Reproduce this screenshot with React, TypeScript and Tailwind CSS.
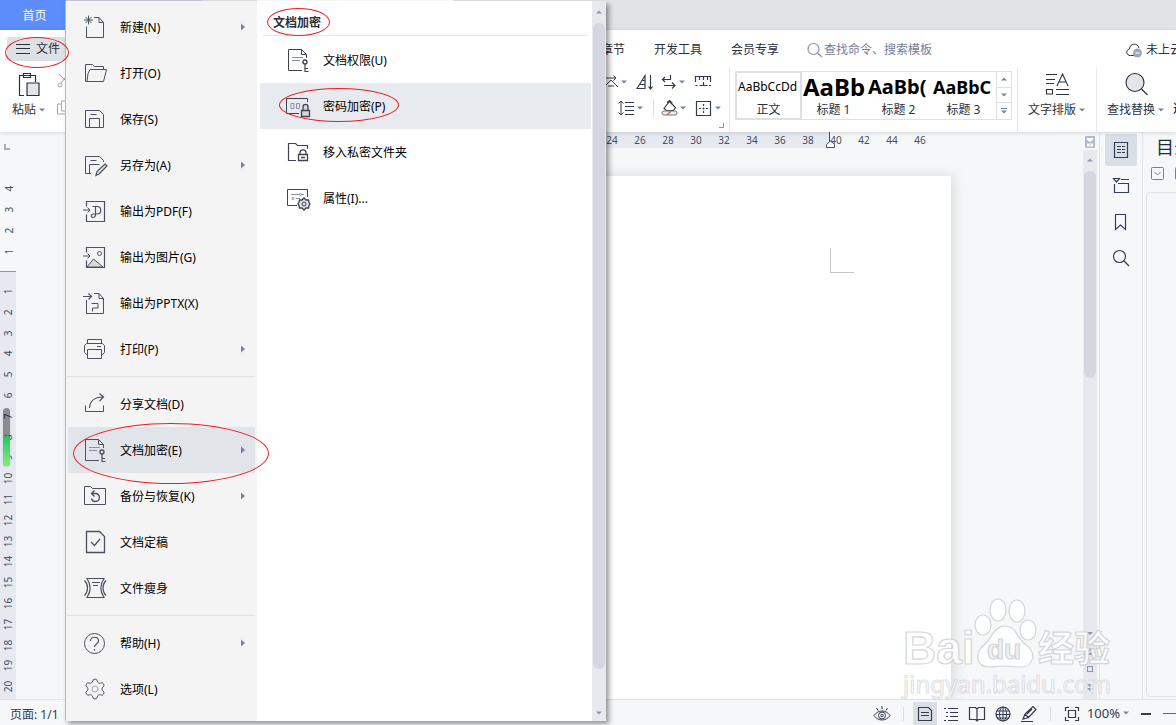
import type { ReactNode } from "react";
import { Settings } from "lucide-react";
import clsx from "clsx";

interface IconProps {
  children: ReactNode;
  size?: number;
  className?: string;
}

function Icon({ children, size = 24, className }: IconProps) {
  return (
    <svg
      width={size}
      height={size}
      viewBox={`0 0 ${size} ${size}`}
      fill="none"
      stroke="currentColor"
      strokeWidth="1"
      aria-hidden="true"
      className={clsx("shrink-0 overflow-visible", className)}
    >
      {children}
    </svg>
  );
}

function Caret() {
  return (
    <svg width="12" height="6" viewBox="0 0 12 6" className="shrink-0" aria-hidden="true">
      <path d="M3 1.5h6L6 4.5z" fill="#7883a0" />
    </svg>
  );
}

function Ring({ className }: { className: string }) {
  return <span className={clsx("pointer-events-none absolute z-30 rounded-[50%] border border-[#ee1c25]", className)} />;
}

const keyDoc = (
  <Icon>
    <path d="M16 22.5H2.5v-21h13l5 5V10" />
    <path d="M15.500 1.500v5h5" />
    <path d="M6 9.5h11M6 12.5h8" stroke="#8b91a0" />
    <circle cx="19" cy="14" r="2" strokeWidth="1.4" />
    <path d="M19 16v7.5h3.5M19 20.500h3" strokeWidth="1.2" />
  </Icon>
);

const icons = {
  create: (
    <Icon>
      <path d="M3.5 11.5v11h17v-15l-4.5-5h-5" />
      <path d="M16 2.5v5h4.5" />
      <path d="M5.5 .5v9M1 5h9M2.5 2l6 6M8.5 2l-6 6" />
    </Icon>
  ),
  open: (
    <Icon>
      <path d="M2.5 20.5v-17h7l2 2h9v3" />
      <path d="M2.500 20.5h18l3-12H7l-2 4-1 8" />
    </Icon>
  ),
  save: (
    <Icon>
      <path d="M2.5 3.5h14l4 4v13h-18z" />
      <path d="M6.5 20.5v-9h10v9M7.5 7.5h6" />
    </Icon>
  ),
  saveAs: (
    <Icon>
      <path d="M8 20.5H2.5v-17h14l4 4V9" />
      <path d="M6.5 20.5v-9h10M7.5 7.5h6" />
      <path d="M13 22.5l1-4 8-7.5 2 2-8 8z" fill="#dfe1e5" strokeWidth="1.2" />
    </Icon>
  ),
  pdf: (
    <Icon>
      <path d="M3.5 7.5v-5h18v20h-18v-7" strokeWidth="1.2" />
      <path d="M0 11h7M4.5 8.5L7 11l-2.5 2.5" />
      <path d="M9.5 7.5h4.500c5 0 5 7.5 0 7.5h-3c-3.5 0-3.5 3.5-1 3.500s2.500-1.500 2.500-3.500v-7.500" strokeWidth="1.2" />
    </Icon>
  ),
  picture: (
    <Icon>
      <path d="M4 22l6.500-8L20 22z" fill="#dcdcde" />
      <path d="M3.5 7.5v-5h18v20h-18v-7" strokeWidth="1.2" />
      <path d="M0 11h7M4.5 8.5L7 11l-2.5 2.5" />
      <circle cx="16.5" cy="8.5" r="2" />
    </Icon>
  ),
  pptx: (
    <Icon>
      <path d="M3.5 9v13.5h17v-15l-4.5-5h-5" />
      <path d="M16 2.5v5h4.5" />
      <path d="M0 5.500h8.5M5.5 2.500l3 3-3 3" strokeWidth="1.2" />
      <path d="M8.5 12.500h6.500v4.500H9.500v3.500" />
    </Icon>
  ),
  print: (
    <Icon>
      <path d="M4.5 6V2.5h14V6" />
      <path d="M4.5 17.5h-1l-2-2v-7l2-2h16l2 2v7l-2 2h-1" />
      <path d="M4.5 12.5h14v9h-14zM14 9.5h4" />
    </Icon>
  ),
  share: (
    <Icon>
      <path d="M2.5 13.5v6h18v-6" />
      <path d="M6.5 16C7 9 11 5 20 5M16.5 1.5L20.5 5l-4 4" strokeWidth="1.2" />
    </Icon>
  ),
  encrypt: keyDoc,
  backup: (
    <Icon>
      <path d="M1.5 2.5h6l2 2h13v16h-21z" />
      <path d="M9 9.500h3.5a4 4 0 1 1-4 5M11.500 6.500l-3 3 3 3" strokeWidth="1.3" />
    </Icon>
  ),
  finalize: (
    <Icon>
      <path d="M3.5 1.5h13l5 5v16h-18z" strokeWidth="1.3" />
      <path d="M8 12l3.5 3.5L17 9" strokeWidth="1.3" />
    </Icon>
  ),
  slim: (
    <Icon>
      <path d="M4 2.5h17c-4 6-4 13 0 19H4c4-6 4-13 0-19z" strokeWidth="1.2" />
      <path d="M1.5 4.5c4 4 4 11 0 15M23 4.500c-4 4-4 11 0 15" strokeWidth="1.2" />
      <path d="M9 6.500h8M10 9.5h5" />
    </Icon>
  ),
  help: (
    <Icon>
      <circle cx="11.5" cy="12.5" r="10" />
      <path d="M7.500 10c0-5 8-5 8 0 0 3-4 3-4 6" strokeWidth="1.2" />
      <path d="M11.5 18v1.5" strokeWidth="1.2" />
    </Icon>
  ),
  options: <Settings size={24} strokeWidth={1} className="shrink-0 [&_circle]:stroke-[#a4a8b0]" />,
  password: (
    <Icon>
      <path d="M13 19.5H.5v-15h21V8" />
      <path d="M5 9.5h3v5H5zM10.500 9.5h3v5h-3z" stroke="#8b91a0" />
      <path d="M15.5 16.5h8v6h-8zM17 16.5V13c0-3.500 5-3.500 5 0v3.5" fill="#d5d7dc" strokeWidth="1.3" />
    </Icon>
  ),
  privateFolder: (
    <Icon>
      <path d="M10 20.5H2.5v-17h7l2 2h10V9" strokeWidth="1.2" />
      <path d="M12.5 14.500h9v6h-9zM14 14.5v-2c0-3.500 6-3.500 6 0v2M15 17.500h4" strokeWidth="1.3" />
    </Icon>
  ),
  properties: (
    <Icon>
      <path d="M11 19.5H1.5v-16h20V11" />
      <path d="M5 8.5h8M16 8.5h2M10 12.5h4" stroke="#8b91a0" />
      <circle cx="14.5" cy="8.5" r="1" stroke="#8b91a0" />
      <circle cx="7" cy="12.5" r="1" stroke="#8b91a0" />
      <path d="M18 12l2 2 2.500 0 .5 2.500 1 1.500-1 1.500-.5 2.500-2.500 0-2 2-2-2-2.500 0-.5-2.500-1-1.500 1-1.500.5-2.500 2.500 0z" fill="#dfe1e5" strokeWidth="1.3" />
      <circle cx="18" cy="18" r="2" />
    </Icon>
  ),
};

interface MenuEntry {
  label: string;
  icon: ReactNode;
  arrow?: boolean;
  active?: boolean;
}

const menuGroups: MenuEntry[][] = [
  [
    { label: "新建(N)", icon: icons.create, arrow: true },
    { label: "打开(O)", icon: icons.open },
    { label: "保存(S)", icon: icons.save },
    { label: "另存为(A)", icon: icons.saveAs, arrow: true },
    { label: "输出为PDF(F)", icon: icons.pdf },
    { label: "输出为图片(G)", icon: icons.picture },
    { label: "输出为PPTX(X)", icon: icons.pptx },
    { label: "打印(P)", icon: icons.print, arrow: true },
  ],
  [
    { label: "分享文档(D)", icon: icons.share },
    { label: "文档加密(E)", icon: icons.encrypt, arrow: true, active: true },
    { label: "备份与恢复(K)", icon: icons.backup, arrow: true },
    { label: "文档定稿", icon: icons.finalize },
    { label: "文件瘦身", icon: icons.slim },
  ],
  [
    { label: "帮助(H)", icon: icons.help, arrow: true },
    { label: "选项(L)", icon: icons.options },
  ],
];

const submenu: MenuEntry[] = [
  { label: "文档权限(U)", icon: keyDoc },
  { label: "密码加密(P)", icon: icons.password, active: true },
  { label: "移入私密文件夹", icon: icons.privateFolder },
  { label: "属性(I)...", icon: icons.properties },
];

function FileMenu() {
  return (
    <div className="absolute top-px left-[65px] z-20 flex h-[720px] w-[541px] border-l border-[#b4bac4] bg-white shadow-[3px_3px_5px_rgba(0,0,0,0.4)]">
      <nav className="w-[191px] shrink-0 bg-[#f4f4f4] pt-[3px]" aria-label="文件">
        {menuGroups.map((group, i) => (
          <div key={i}>
            {i > 0 && <hr className="my-1 mr-[2px] border-[#e0e1e5]" />}
            {group.map((item) => (
              <button
                key={item.label}
                type="button"
                className={clsx(
                  "relative mx-[2px] flex h-[46px] w-[187px] items-center gap-[13px] pr-[9px] pl-[15px] text-left text-[#4b5160]",
                  item.active && "bg-[#e1e4e9]"
                )}
              >
                {item.icon}
                <span className="grow pt-[2px] text-xs whitespace-nowrap text-black">{item.label}</span>
                {item.arrow && (
                  <svg width="6" height="8" viewBox="0 0 6 8" aria-hidden="true">
                    <path d="M1 .5v7L5 4z" fill="#75809b" />
                  </svg>
                )}
                {item.active && <Ring className="-top-1 left-[5px] h-[61px] w-[196px]" />}
              </button>
            ))}
          </div>
        ))}
      </nav>

      <section className="grow pt-px pl-[3px]">
        <h2 className="relative mr-1 ml-[3px] mb-px flex h-[34px] items-center border-b border-[#e6e7ea] pt-2 pl-[10px] text-xs font-bold text-[#2b303c]">
          文档加密
          <Ring className="top-[6px] left-1 h-[28px] w-[63px]" />
        </h2>
        {submenu.map((item) => (
          <button
            key={item.label}
            type="button"
            className={clsx(
              "relative flex h-[46px] w-[331px] items-center gap-[13px] pl-[26px] text-left text-[#3d4352]",
              item.active && "bg-[#e7eaef]"
            )}
          >
            {item.icon}
            <span className="pt-[2px] text-xs text-black">{item.label}</span>
            {item.active && <Ring className="top-[5px] left-[19px] h-[34px] w-[120px]" />}
          </button>
        ))}
      </section>

      <div className="flex w-[14px] shrink-0 flex-col items-center bg-[#e8e9ee] pt-2 pb-[5px]">
        <svg width="6" height="6" viewBox="0 0 6 6" aria-hidden="true">
          <path d="M0 4.5h6L3 1.5z" fill="#8b96b3" />
        </svg>
        <div className="mt-2 h-[646px] w-3 rounded-full bg-[#d4d7df]" />
        <svg width="6" height="6" viewBox="0 0 6 6" className="mt-auto" aria-hidden="true">
          <path d="M0 1.5h6L3 4.5z" fill="#8b96b3" />
        </svg>
      </div>
    </div>
  );
}

const gallery = [
  { sample: "AaBbCcDd", label: "正文", style: "text-xs font-normal" },
  { sample: "AaBb", label: "标题 1", style: "text-2xl font-bold" },
  { sample: "AaBb(", label: "标题 2", style: "text-xl font-bold" },
  { sample: "AaBbC", label: "标题 3", style: "text-lg font-bold" },
];

function Tool({ label, children, caret }: { label: string; children: ReactNode; caret?: boolean }) {
  return (
    <button type="button" aria-label={label} className="flex items-center text-[#343b4d]">
      <Icon size={16}>{children}</Icon>
      {caret && <Caret />}
    </button>
  );
}

function BigTool({ label, children }: { label: string; children: ReactNode }) {
  return (
    <button type="button" className="flex shrink-0 flex-col items-center text-[#2b3142]">
      <Icon>{children}</Icon>
      <span className="flex h-7 items-center text-xs whitespace-nowrap">
        {label}
        <Caret />
      </span>
    </button>
  );
}

function Ribbon() {
  return (
    <header className="relative h-[102px] shrink-0 bg-white shadow-[0_1px_4px_rgba(0,0,0,0.14)]">
      <div className="flex h-[38px] items-center overflow-hidden pl-[7px] text-xs whitespace-nowrap text-[#2b303c]">
        <button type="button" className="flex h-6 w-[60px] shrink-0 items-center gap-[5px] rounded-xs bg-[#dce1e5] pl-2">
          <Icon size={16}>
            <path d="M1 3.5h14M1 7.500h14M1 12.500h14" />
          </Icon>
          文件
        </button>
        <div className="flex items-center gap-[29px] pt-px pl-[534px]">
          <button type="button">章节</button>
          <button type="button">开发工具</button>
          <button type="button">会员专享</button>
          <label className="flex items-center text-[#737c98]">
            <Icon size={16} className="text-[#8a93ab]">
              <circle cx="5.5" cy="7" r="5.5" strokeWidth="1.2" />
              <path d="M9.500 11l4.500 4" strokeWidth="1.4" />
            </Icon>
            <input
              aria-label="搜索"
              placeholder="查找命令、搜索模板"
              className="w-[160px] bg-transparent outline-none placeholder:text-[#737c98]"
            />
          </label>
        </div>
        <button type="button" className="ml-[142px] flex shrink-0 items-center gap-1 pt-px">
          <Icon size={16}>
            <path d="M8 13.5H4.500c-5 0-4.500-6-1-6.5 0-6 8.500-6.500 9.500-1" />
            <circle cx="11.500" cy="11" r="4.5" fill="#a0a8bb" stroke="none" />
            <path d="M9.500 11h4" stroke="#fff" />
          </Icon>
          未上云
        </button>
      </div>

      <div className="flex h-[64px] items-start overflow-hidden">
        <div className="flex w-[66px] shrink-0 gap-[-4px] pt-1 pl-3">
          <button type="button" className="flex w-[45px] shrink-0 flex-col items-start text-[#2b3142]">
            <Icon className="ml-1">
              <path d="M8 23.5H3.500V3.500h16V10M7.500 1.500h7v4h-7z" strokeWidth="1.2" />
              <path d="M11 11h12v12.500H11z" fill="#e2e4e8" strokeWidth="1.2" />
            </Icon>
            <span className="flex h-7 items-center text-xs whitespace-nowrap">
              粘贴
              <Caret />
            </span>
          </button>
          <div className="flex flex-col gap-3 text-[#a3a7b0]">
            <Icon size={16}>
              <path d="M2 2l10 10M11 2L4 11" />
              <circle cx="3" cy="13" r="2" />
            </Icon>
            <Icon size={16}>
              <path d="M4.5 1h9v10h-9zM4.500 4h-4v10h9v-3" />
            </Icon>
          </div>
        </div>

        <div className="ml-[536px] flex w-[127px] shrink-0 flex-col pt-[3px]">
          <div className="flex h-[22px] items-center gap-[7px]">
            <Tool label="字符缩放" caret>
              <path d="M2 13l7-7 7 7M6 12h6M4 4h10M11.500 1.500L14 4l-2.500 2.500" />
            </Tool>
            <Tool label="排序">
              <path d="M0 14.500L8 1.500v13zM3 10.500h5M5 6.500h3M13.500 1v14M11.500 12.500l2 2.500 2-2.500" strokeWidth="1.2" />
            </Tool>
            <Tool label="换行" caret>
              <path d="M10.500 1v4.500h-8M5 3L2.500 5.500 5 8M4 11.500h11M12 8.500l3 3-3 3" strokeWidth="1.2" />
            </Tool>
            <Tool label="标尺">
              <path d="M.5 8V2.500h15V8M4.500 3v3M8.500 3v3M12.500 3v3M4.500 11.500h8M8.500 8v3M.5 11.500h2M14 11.500h2" strokeWidth="1.2" />
            </Tool>
          </div>
          <div className="mt-1 flex h-[22px] items-center gap-[7px] pl-4">
            <Tool label="行距" caret>
              <path d="M3 1v14M.5 3.5L3 1l2.500 2.500M.5 12.500L3 15l2.500-2.500M7 2.500h9M7 6.500h9M7 10.500h9M7 14.500h9" />
            </Tool>
            <span className="h-[18px] w-px bg-[#dcdfe5]" />
            <Tool label="底纹" caret>
              <path d="M3 8.500l5.500-7 6 6-2 3h-7zM6 2.500l2.500-2 3 3" strokeWidth="1.2" />
              <rect x="1" y="11" width="15" height="4" rx="2" fill="#eee" stroke="#777" />
              <path d="M6 15l4-4" stroke="#e05a4f" strokeWidth="1.3" />
            </Tool>
            <Tool label="边框" caret>
              <path d="M.5 1.500h14v14H.5z" strokeWidth="1.2" />
              <path d="M7.500 4v2M7.500 7.500v2M7.500 11v2M3 8.500h2M6.500 8.500h2M10 8.500h2" strokeWidth="1.2" />
            </Tool>
          </div>
          <svg width="5" height="5" viewBox="0 0 5 5" className="mt-1 ml-[117px]" aria-hidden="true">
            <path d="M4.5 0v4.5H0" fill="none" stroke="#8d94a6" />
          </svg>
        </div>

        <div className="flex h-full shrink-0 items-start border-l border-[#e6e8ec] pl-[5px]">
          <div className="mt-[3px] flex h-[49px] border border-[#dfe1e6]">
            {gallery.map((item, i) => (
              <button
                key={item.label}
                type="button"
                className={clsx(
                  "flex w-[65px] flex-col whitespace-nowrap",
                  i === 0 && "outline-2 -outline-offset-1 outline-[#dfe0e6]"
                )}
              >
                <span className={clsx("flex h-[30px] items-center pl-[2px] text-black", item.style)}>{item.sample}</span>
                <span className="w-full text-center text-xs leading-4 text-[#2b303c]">{item.label}</span>
              </button>
            ))}
            <div className="flex w-[15px] flex-col divide-y divide-[#dfe1e6] border-l border-[#dfe1e6] bg-white">
              <button type="button" aria-label="上一行" className="flex grow items-center justify-center">
                <span className="rotate-180"><Caret /></span>
              </button>
              <button type="button" aria-label="下一行" className="flex grow items-center justify-center"><Caret /></button>
              <button type="button" aria-label="更多样式" className="flex grow flex-col items-center justify-center">
                <span className="h-px w-[6px] bg-[#75809b]" />
                <Caret />
              </button>
            </div>
          </div>
        </div>

        <div className="ml-[5px] flex h-full shrink-0 border-l border-[#e6e8ec] pt-1 pr-2 pl-[10px]">
          <BigTool label="文字排版">
            <path d="M0 2.500h11M0 7.500h9M0 11.500h8M.5 17.500h6v4.500h-6zM10 17.500h13M10 22.500h13M11 14l5.500-12L22 14M13 10h7" strokeWidth="1.1" />
          </BigTool>
        </div>
        <div className="flex h-full shrink-0 border-l border-[#e6e8ec] pt-1 pl-[10px]">
          <BigTool label="查找替换">
            <circle cx="10" cy="10.500" r="9" fill="#e4e5e8" strokeWidth="1.1" />
            <path d="M16.500 17l6 6" strokeWidth="1.3" />
          </BigTool>
          <button type="button" className="ml-[6px] self-start pt-[29px] text-xs whitespace-nowrap">选择</button>
        </div>
      </div>
      <Ring className="top-[7px] left-[5px] h-[31px] w-[64px]" />
    </header>
  );
}

function VerticalRuler() {
  const ticks = Array.from({ length: 20 }, (_, i) => i + 1);
  return (
    <aside className="relative flex w-4 shrink-0 flex-col text-[10px] leading-none text-[#474f63]">
      <div className="h-[46px] shrink-0 pt-3 pl-1">
        <svg width="6" height="6" viewBox="0 0 6 6" aria-hidden="true">
          <path d="M1 0v5h5" fill="none" stroke="#a9adba" strokeWidth="2" />
        </svg>
      </div>
      <div className="grid h-[84px] shrink-0 grid-rows-4">
        {[4, 3, 2, 1].map((n) => (
          <span key={n} className="flex -rotate-90 items-center justify-center">{n}</span>
        ))}
      </div>
      <div className="mt-[9px] grow border-t border-[#8c9bab] bg-[#e6e9ef] pt-[9px]">
        <div className="grid h-[416px] auto-rows-fr">
          {ticks.map((n) => (
            <span key={n} className="flex -rotate-90 items-center justify-center">{n}</span>
          ))}
        </div>
      </div>
      <div className="absolute top-[276px] left-[3px] h-[58px] w-[7px] overflow-hidden rounded-full bg-black/40 shadow">
        <div className="mt-[28px] h-[30px] bg-linear-to-b from-[#1fc25f] to-[#7df07d]" />
      </div>
    </aside>
  );
}

function Workspace() {
  return (
    <main className="flex grow overflow-hidden">
      <VerticalRuler />
      <div className="flex grow flex-col overflow-hidden">
        <div className="flex h-4 shrink-0 bg-[linear-gradient(to_right,transparent_134px,#e6e9ef_134px,#e6e9ef_813px,transparent_813px)] pl-[582px] text-[10px] text-[#474f63]">
          {[24, 26, 28, 30, 32, 34, 36, 38, 40, 42, 44, 46].map((n) => (
            <span key={n} className="relative w-7 shrink-0 text-center leading-4">
              {n}
              {n === 40 && (
                <svg width="10" height="16" viewBox="0 0 10 16" className="absolute top-0 left-1" aria-hidden="true">
                  <path d="M3.5 0v10M.5 15.5v-3l4-3.500 4 3.500v3z" fill="#fff" stroke="#474f63" />
                </svg>
              )}
            </span>
          ))}
        </div>
        <article className="mt-7 ml-[134px] flex w-[801px] grow items-start justify-end bg-white pt-[72px] pr-[97px] shadow-[2px_0_14px_rgba(0,0,0,0.13)]">
          <span className="h-[25px] w-6 border-b border-l border-[#c4c4c4]" />
        </article>
      </div>

      <div className="flex w-[14px] shrink-0 flex-col items-center">
        <svg width="10" height="12" viewBox="0 0 10 12" className="mt-1 shrink-0" aria-hidden="true">
          <rect width="10" height="12" rx="1" fill="#b2bad0" />
          <path d="M2 2h6v2L5 6 2 4zM2 7.500h6v3H2z" fill="#fff" />
          <path d="M5 8v2" stroke="#b2bad0" />
        </svg>
        <div className="mt-[2px] flex w-full grow flex-col items-center bg-[#e8e9ee] pt-[7px] pb-2">
          <svg width="6" height="6" viewBox="0 0 6 6" aria-hidden="true">
            <path d="M0 4.5h6L3 1.5z" fill="#8b96b3" />
          </svg>
          <div className="mt-2 h-[207px] w-3 shrink-0 rounded-full bg-[#d4d7df]" />
          <svg width="6" height="60" viewBox="0 0 6 60" className="mt-auto" aria-hidden="true">
            <path d="M0 1h6L3 4zM0 20l3-3 3 3zM0 24l3-3 3 3zM0 53h6l-3 3zM0 57h6l-3 3z" fill="#8b96b3" />
            <rect x=".5" y="35.5" width="5" height="5" fill="none" stroke="#8b96b3" />
          </svg>
        </div>
      </div>

      <nav className="ml-[2px] flex w-[44px] shrink-0 flex-col items-center gap-1 border-x border-[#e1e4e8] pt-[2px] text-[#343f57]">
        <button type="button" aria-label="目录" className="flex size-8 items-center justify-center rounded-xs bg-[#d9dfe6]">
          <Icon size={16}>
            <path d="M1.5 .5h13v15h-13z" strokeWidth="1.2" />
            <path d="M4 4.5h4M9 4.5h3M4 7.5h4M9 7.5h3M4 10.5h4M9 10.5h3" />
          </Icon>
        </button>
        <button type="button" aria-label="章节" className="flex size-8 items-center justify-center">
          <Icon size={16}>
            <path d="M.5 .5h6l-3 3.500zM8 1.500h8M1.500 6v8.500h14v-9H5" strokeWidth="1.2" />
          </Icon>
        </button>
        <button type="button" aria-label="书签" className="flex size-8 items-center justify-center">
          <Icon size={16}>
            <path d="M2.5 .5h10v15l-5-4.500-5 4.500z" strokeWidth="1.2" />
          </Icon>
        </button>
        <button type="button" aria-label="查找" className="flex size-8 items-center justify-center">
          <Icon size={16}>
            <circle cx="6.5" cy="6.5" r="6" strokeWidth="1.2" />
            <path d="M11 11l5 5" strokeWidth="1.3" />
          </Icon>
        </button>
      </nav>

      <aside className="flex w-[33px] shrink-0 flex-col overflow-hidden pl-[3px]">
        <h2 className="pt-[3px] pl-[10px] text-lg leading-6 whitespace-nowrap text-[#222b40]">目录</h2>
        <div className="flex gap-[11px] pt-2 pl-[5px] text-[#7b7f87]">
          <Icon size={13}>
            <rect x=".5" y=".5" width="12" height="12" rx="1" />
            <path d="M3.5 5l3 3 3-3" />
          </Icon>
          <Icon size={13}>
            <rect x=".5" y=".5" width="12" height="12" rx="1" />
          </Icon>
        </div>
        <div className="mt-3 mb-[2px] w-[60px] grow rounded-sm border border-[#dfe2e7]" />
      </aside>
    </main>
  );
}

function ViewButton({ label, children, active }: { label: string; children: ReactNode; active?: boolean }) {
  return (
    <button
      type="button"
      aria-label={label}
      className={clsx("flex h-full items-center justify-center", active ? "mx-px w-6 bg-[#dadee6]" : "w-[26px]")}
    >
      <Icon size={16}>{children}</Icon>
    </button>
  );
}

function StatusBar() {
  return (
    <footer className="flex h-[26px] shrink-0 items-center border-t border-[#dfe2e8] pl-[10px] text-xs text-[#343b4d]">
      <span className="pt-1">页面: 1/1</span>
      <div className="ml-auto flex h-full items-center pt-[2px]">
        <ViewButton label="护眼模式">
          <path d="M0 9.5c4-6 12-6 16 0-4 6-12 6-16 0zM8 0v3M2.5 2l1.500 2.500M13.500 2L12 4.500" />
          <circle cx="8" cy="9.5" r="3.500" />
          <circle cx="8" cy="9.5" r="1.300" />
        </ViewButton>
        <span className="mx-2 h-[14px] w-px bg-[#d8dce3]" />
        <ViewButton label="页面视图" active>
          <path d="M1.5 1.500h10l3 3v10h-13zM4 6.500h8M4 9.500h8" strokeWidth="1.2" />
        </ViewButton>
        <ViewButton label="大纲">
          <path d="M1 2.5h2M5 2.5h10M3 6.5h2M7 6.5h8M3 10.5h2M7 10.5h8M1 14.5h2M5 14.5h10" strokeWidth="1.2" />
        </ViewButton>
        <ViewButton label="阅读版式">
          <path d="M8 3L6.500 1.500h-6v12h6L8 15l1.500-1.500h6v-12h-6zM8 3v12" strokeWidth="1.2" />
        </ViewButton>
        <ViewButton label="Web版式">
          <circle cx="8" cy="8" r="7" strokeWidth="1.2" />
          <ellipse cx="8" cy="8" rx="3.500" ry="7" />
          <path d="M8 1v14M2 5h12M1 8.500h14M2 12h12" />
        </ViewButton>
        <ViewButton label="写作模式">
          <path d="M2 13l2-5 8-7.500 3 3-7.500 8zM4 8l4 4M11 3L6 8M0 15.500h12" strokeWidth="1.2" />
        </ViewButton>
        <span className="mx-2 h-[14px] w-px bg-[#d8dce3]" />
        <ViewButton label="适应页面">
          <path d="M1.5 5V1.500H5M11 1.500h3.500V5M14.500 11v3.500H11M5 14.500H1.500V11M4.500 4.500h7v7h-7z" strokeWidth="1.2" />
        </ViewButton>
        <button type="button" className="ml-[2px] flex items-center text-[13px]">
          100%
          <Caret />
        </button>
        <button type="button" aria-label="缩小" className="ml-[9px] h-[2px] w-[10px] bg-[#343b4d]" />
        <span className="ml-3 h-px w-[13px] bg-[#5d6475]" />
      </div>
    </footer>
  );
}

function Watermark() {
  return (
    <svg
      width="216"
      height="106"
      viewBox="0 0 216 106"
      className="pointer-events-none absolute right-[60px] bottom-[24px]"
      fill="#fff"
      fillOpacity="0.8"
      stroke="#c4c5c8"
      strokeOpacity="0.7"
      strokeWidth="1.2"
      aria-label="Baidu 经验"
    >
      <text x="3" y="69" className="font-['Liberation_Sans',sans-serif] text-[46px] font-bold">Bai</text>
      <ellipse cx="83" cy="30" rx="8" ry="10" />
      <ellipse cx="98" cy="15" rx="8" ry="11" />
      <ellipse cx="117" cy="16" rx="8" ry="11" />
      <ellipse cx="128" cy="35" rx="8" ry="10" />
      <path d="M105 31c11 0 12 12 20 18 13 9 8 23-4 23-6 0-10-1-16-1s-10 1-16 1c-12 0-16-13-4-23 7-6 9-18 20-18z" />
      <text x="87" y="64" fill="#eceef1" className="font-['Liberation_Sans',sans-serif] text-[28px] font-bold">du</text>
      <text x="138" y="67" className="font-['Noto_Sans_CJK_SC',sans-serif] text-[36px] font-bold">经验</text>
      <text x="3" y="98" strokeOpacity="0.5" className="font-['Noto_Sans',sans-serif] text-2xl">jingyan.baidu.com</text>
    </svg>
  );
}

export default function App() {
  return (
    <div className="relative flex h-screen min-h-[725px] flex-col overflow-hidden bg-[#f5f7f9] font-['Noto_Sans','Noto_Sans_CJK_SC',sans-serif]">
      <div className="flex h-[30px] shrink-0 bg-[#e2e3e7] text-xs">
        <button type="button" className="w-[66px] shrink-0 bg-[#5c8dfa] pt-[2px] pl-[3px] text-white">首页</button>
        <div className="w-[137px] bg-[#c9cdd8]" />
        <div className="w-[54px]" />
        <div className="w-[196px] bg-white" />
      </div>
      <Ribbon />
      <Workspace />
      <StatusBar />
      <Watermark />
      <FileMenu />
    </div>
  );
}
